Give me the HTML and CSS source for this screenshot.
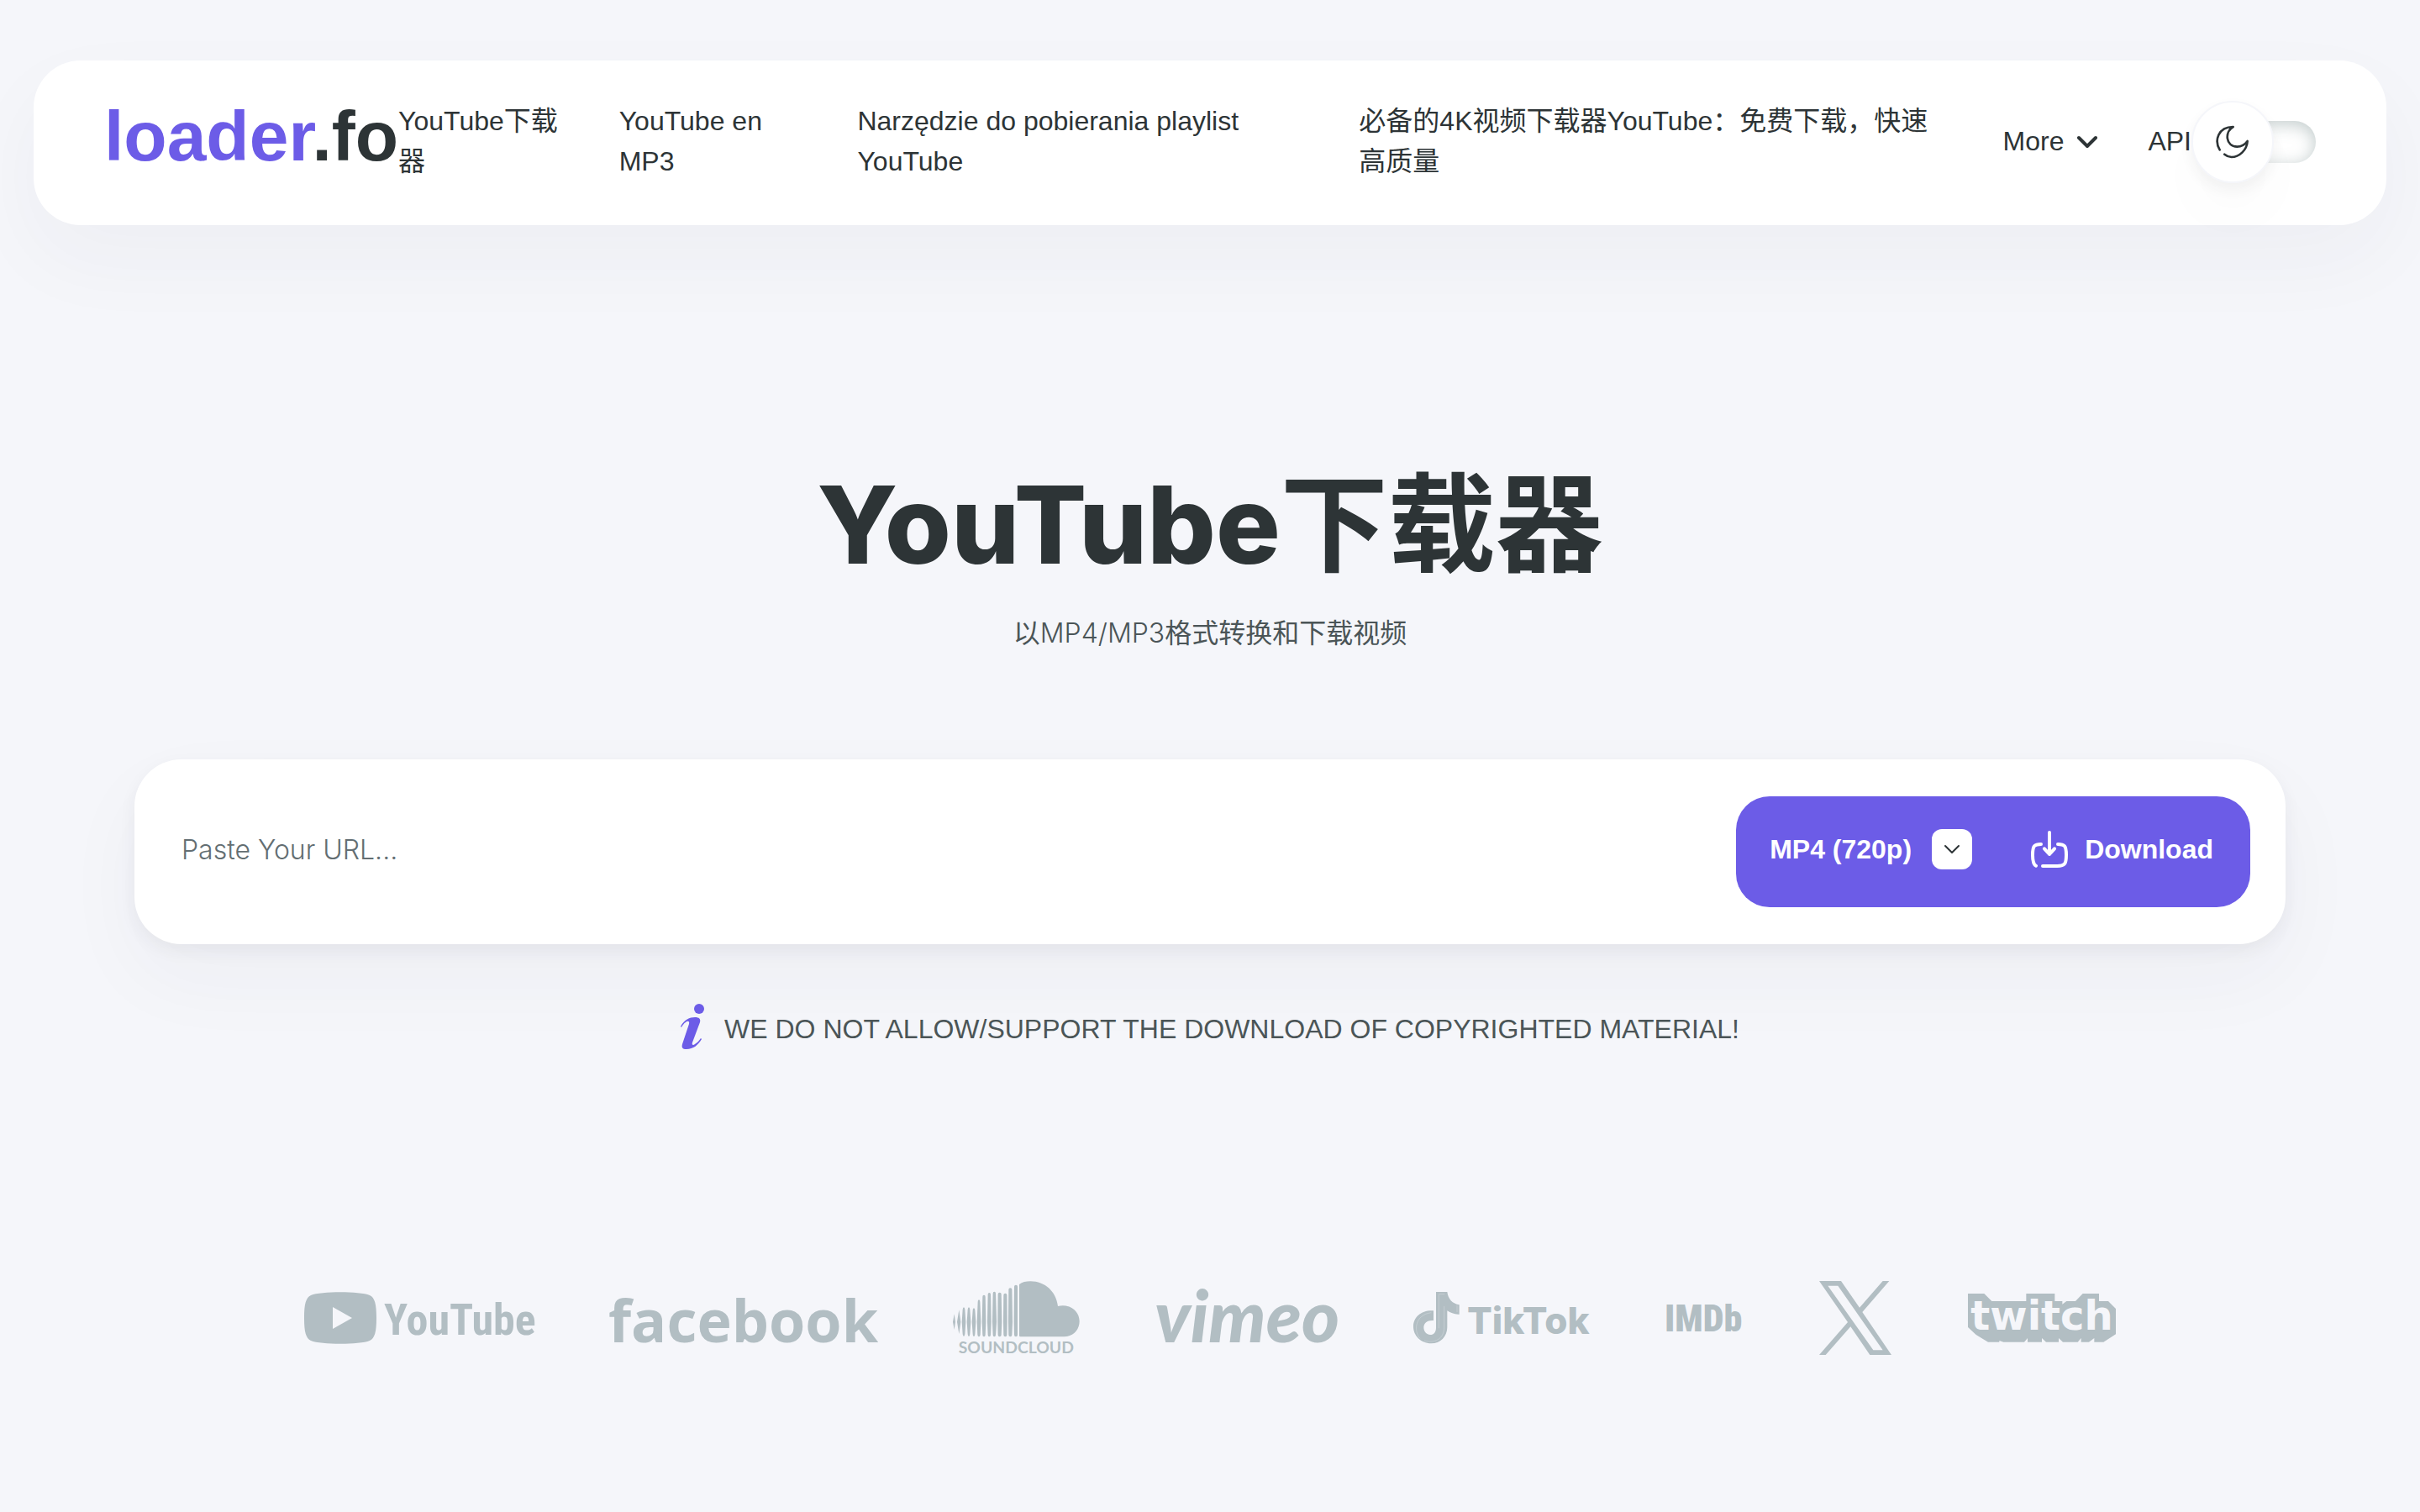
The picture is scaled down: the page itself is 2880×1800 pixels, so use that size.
FILE: index.html
```html
<!DOCTYPE html>
<html lang="zh">
<head>
  <meta charset="UTF-8" />
  <meta name="viewport" content="width=device-width, initial-scale=1.0" />
  <title>YouTube下载器</title>
  <link rel="stylesheet" href="styles.css">
</head>
<body>
  <header class="header">
    <a class="logo" href="#"><span>loader</span>.fo</a>
    <nav class="nav">
      <a href="#">YouTube下载器</a>
      <a href="#">YouTube en MP3</a>
      <a href="#">Narzędzie do pobierania playlist YouTube</a>
      <a href="#">必备的4K视频下载器YouTube：免费下载，快速高质量</a>
      <button class="more" type="button">More
        <svg width="24" height="18" viewBox="2 0 24 18" fill="none" stroke="currentColor" stroke-width="4" stroke-linecap="round" stroke-linejoin="round"><path d="M4 5l10 10L24 5" /></svg>
      </button>
      <a href="#">API</a>
    </nav>
    <label class="theme">
      <input type="checkbox" aria-label="Dark mode" />
      <span class="knob">
        <svg width="40" height="40" viewBox="292 150 120 120" fill="none" stroke="currentColor" stroke-width="8" stroke-linecap="round" stroke-linejoin="round"><path d="M306 238C286 205 300 156 354 156C323 174 326 225 368 227C385 227 397 218 405 207C403 240 375 264 348 264C338 263 330 260 323 254" /></svg>
      </span>
    </label>
  </header>

  <main class="main">
    <h1>YouTube<span>下载器</span></h1>
    <p class="subtitle">以<span>MP4/MP3</span>格式转换和下载视频</p>

    <form class="search">
      <input class="url" type="text" placeholder="Paste Your URL..." aria-label="URL" />
      <div class="actions">
        <label class="format">
          <select aria-label="Format">
            <option>MP4 (720p)</option>
          </select>
          <span class="arrow">
            <svg width="20" height="12" viewBox="0 0 20 12" fill="none" stroke="currentColor" stroke-width="2" stroke-linecap="round" stroke-linejoin="round"><path d="M2 2l8 8 8-8" /></svg>
          </span>
        </label>
        <button class="download" type="button">
          <svg width="44" height="44" viewBox="414 84 132 132" fill="none" stroke="currentColor" stroke-width="12" stroke-linecap="round" stroke-linejoin="round"><path d="M450 132C426 132 420 138 420 170C420 196 424 205 432 209M456 210H508C535 210 540 202 540 170C540 138 534 132 510 132M480 90V168M462 148L480 168L498 148" /></svg>
          Download
        </button>
      </div>
    </form>

    <p class="notice">
      <svg width="28" height="54" viewBox="0 0 28 54" fill="currentColor"><ellipse cx="22" cy="6" rx="6" ry="6" /><path d="M0 27C4 19 11 16 17 16C22 16 24 18 23 22L14 46C13 49 15 50 17 48C20 46 22 44 24 41L25 42C21 49 15 54 7 54C2 54 1 52 2 48L10 24C11 20 8 20 6 22C4 23 2 26 1 28Z" /></svg>
      WE DO NOT ALLOW/SUPPORT THE DOWNLOAD OF COPYRIGHTED MATERIAL!
    </p>

    <div class="brands">
      <!-- YouTube -->
      <svg width="271" height="62" viewBox="0 0 271 62">
        <path d="M8 4C20-1 66-1 78 4C84 7 86 14 86 31C86 48 84 55 78 58C66 63 20 63 8 58C2 55 0 48 0 31C0 14 2 7 8 4ZM34 18V44L57 31Z" />
        <text class="t-youtube" x="95" y="51">YouTube</text>
      </svg>
      <!-- facebook -->
      <svg width="319" height="62" viewBox="0 0 319 62">
        <text class="t-facebook" x="0" y="60">facebook</text>
      </svg>
      <!-- SoundCloud -->
      <svg width="151" height="88" viewBox="105 76 453 264">
        <path d="M342 88C352 80 366 77 382 77C434 77 474 114 480 166C518 155 557 182 557 220C557 250 534 275 502 275H346Q342 275 342 271Z" />
        <path d="M110 194l4 28-4 28-5-28zM127 179l6 43-6 43-7-43zM144 170q3 0 4 8l3 44-3 44q-2 8-4 8t-4-8l-3-44 3-44q1-8 4-8zM162 170q3 0 4 8l3 44-3 44q-1 8-4 8t-4-8l-3-44 3-44q1-8 4-8zM180 173q4 0 4 8l3 41-3 44q0 8-4 8t-4-8l-3-44 3-41q0-8 4-8zM198 143q4 0 4 8l3 71-2 46q-1 7-5 7t-5-7l-2-46 3-71q0-8 4-8z" />
        <path d="M216 126q5 0 5 6l2 90-2 46q0 7-5 7t-5-7l-2-46 2-90q0-6 5-6zM235 118q5 0 5 6l2 98-2 46q0 7-5 7t-5-7l-2-46 2-98q0-6 5-6zM253 114q5 0 5 6l3 102-3 46q0 7-5 7t-5-7l-2-46 2-102q0-6 5-6zM272 117q6 0 6 6l2 99-2 46q0 7-6 7t-6-7l-1-46 1-99q0-6 6-6zM292 120q6 0 6 6l1 96-1 46q0 7-6 7t-6-7l-1-46 1-96q0-6 6-6zM310 101q6 0 6 6l2 115-2 46q0 7-6 7t-6-7l-1-46 1-115q0-6 6-6zM330 90q6 0 6 6v172q0 7-6 7t-6-7l-1-46 1-126q0-6 6-6z" />
        <text class="t-soundcloud" x="331" y="334">SOUNDCLOUD</text>
      </svg>
      <!-- vimeo -->
      <svg width="215" height="62" viewBox="0 0 215 62">
        <text class="t-vimeo" x="-2" y="60">vimeo</text>
      </svg>
      <!-- TikTok -->
      <svg width="210" height="62" viewBox="0 0 210 62">
        <svg width="55" height="62" viewBox="126 114 165 186">
          <path d="M207 114H247C250 140 266 156 290 160V194C273 195 259 189 247 181V240C247 274 222 298 190 298C152 298 126 270 126 238C126 203 155 178 198 181V216C177 214 163 225 163 241C163 256 174 267 186 267C200 267 207 256 207 242Z" />
          <path class="seam" d="M217 244V122H238M150 280C128 258 128 196 190 188M165 288C200 298 236 284 236 240V165M282 162V186" />
        </svg>
        <text class="t-tiktok" x="64" y="50">TikTok</text>
      </svg>
      <!-- IMDb -->
      <svg width="91" height="38" viewBox="0 0 91 38">
        <text class="t-imdb" x="-2" y="35">IMDb</text>
      </svg>
      <!-- X -->
      <svg width="86" height="88" viewBox="135 75 258 264">
        <path d="M135 75H213L279 170L362 75H385L289 186L393 339H316L247 238L158 339H135L237 222ZM166 92L328 322H362L202 92Z" />
      </svg>
      <!-- Twitch -->
      <svg width="176" height="58" viewBox="666 120 528 174">
        <path d="M666 120H724L751 147H874V120H976V147H1003V158L1018 147H1050L1076 120H1134V147H1167L1194 174V265L1150 293H1117V279L1098 293H1070V279L1058 293H1005L990 279V293H945L930 279V293H879V279L867 293H793L778 288V293H738L695 267L666 240Z" />
        <text class="t-twitch" x="930" y="250">twitch</text>
      </svg>
    </div>
  </main>
</body>
</html>
```
FILE: styles.css
```css
* {
  box-sizing: border-box;
}

body {
  margin: 0;
  background: #f5f6fa;
  color: #2d3436;
  font-family: "Liberation Sans", "Noto Sans CJK SC", sans-serif;
  font-size: 32px;
  line-height: 48px;
}

a {
  color: inherit;
  text-decoration: none;
}

input, select, button {
  font: inherit;
  color: inherit;
  border: none;
  background: none;
  padding: 0;
  margin: 0;
}

button {
  cursor: pointer;
}

.header {
  display: flex;
  align-items: flex-start;
  margin: 72px 40px 0;
  padding: 48px 84px 50px;
  background: #fff;
  border-radius: 56px;
  box-shadow: 0 40px 100px rgba(40, 40, 70, 0.04);
}

.logo {
  font-size: 84px;
  line-height: 84px;
  font-weight: bold;
}

.logo span {
  color: #6c5ce7;
}

.nav {
  flex: 1;
  display: flex;
  align-items: center;
  gap: 60px;
}

.more {
  display: flex;
  align-items: center;
  gap: 16px;
}

/* Theme switch */
.theme {
  display: flex;
  align-items: center;
  flex-shrink: 0;
  cursor: pointer;
}

.theme input {
  order: 2;
  appearance: none;
  width: 100px;
  height: 50px;
  margin-left: -50px;
  border-radius: 25px;
  box-shadow: inset 0 4px 20px rgba(99, 124, 124, 0.4);
}

.knob {
  position: relative;
  display: flex;
  align-items: center;
  justify-content: center;
  width: 98px;
  height: 98px;
  order: 1;
  z-index: 1;
  background: #fff;
  border: 2px solid #f5f6fa;
  border-radius: 50%;
  box-shadow: 0 8px 16px rgba(45, 52, 54, 0.06), 0 40px 80px rgba(45, 52, 54, 0.02);
}

.main {
  padding: 282px 160px 0;
  text-align: center;
}

h1 {
  margin: 0 0 30px;
  font-family: Inter, "Noto Sans CJK SC", sans-serif;
  font-size: 128px;
  line-height: 150px;
  font-weight: 800;
}

h1 span {
  font-weight: 700;
}

.subtitle {
  margin: 0 0 126px;
  font-family: Inter, "Noto Sans CJK SC", sans-serif;
  color: #4b5557;
}

.subtitle span {
  font-weight: 300;
}

.search {
  display: flex;
  align-items: center;
  padding: 44px 42px 44px 56px;
  background: #fff;
  border-radius: 56px;
  box-shadow: 0 8px 20px rgba(45, 52, 64, 0.06), 0 40px 100px rgba(40, 40, 80, 0.04);
}

.url {
  flex: 1;
  height: 132px;
  padding-bottom: 6px;
  outline: none;
  font-family: Inter, sans-serif;
  font-weight: 300;
}

.url::placeholder {
  color: #636e72;
}

.actions {
  display: flex;
  align-items: center;
  gap: 70px;
  height: 132px;
  padding: 0 44px 6px 40px;
  background: #6c5ce7;
  border-radius: 40px;
  color: #fff;
  font-weight: bold;
}

.format {
  display: flex;
  align-items: center;
  gap: 24px;
}

.format select {
  appearance: none;
  outline: none;
}

.arrow {
  display: flex;
  align-items: center;
  justify-content: center;
  width: 48px;
  height: 48px;
  background: #fff;
  border-radius: 12px;
  color: #2d3436;
}

.download {
  display: flex;
  align-items: center;
  gap: 20px;
}

.notice {
  display: flex;
  justify-content: center;
  align-items: flex-end;
  gap: 24px;
  margin: 71px 0 0;
  color: #4b5557;
}

.notice svg {
  color: #6c5ce7;
}

/* Supported sites */
.brands {
  display: flex;
  justify-content: center;
  align-items: center;
  gap: 91px;
  margin: 276px 0 99px;
}

.brands svg {
  fill: #b2bec3;
  flex-shrink: 0;
  overflow: visible;
}

.brands .seam {
  fill: none;
  stroke: #f5f6fa;
  stroke-width: 2px;
  opacity: 0.4;
}

.t-youtube {
  font: bold 52px "Roboto Condensed", Roboto, sans-serif;
}

.t-facebook {
  font: bold 70px "Open Sans", sans-serif;
}

.t-soundcloud {
  font: bold 58px Lato, sans-serif;
  text-anchor: middle;
}

.t-vimeo {
  font: italic 900 86px Lato, sans-serif;
}

.t-tiktok {
  font: 800 44px Inter, sans-serif;
}

.t-imdb {
  font: 900 44px "Roboto Condensed", Roboto, sans-serif;
}

.brands .t-twitch {
  font: bold 144px "DejaVu Sans", sans-serif;
  fill: #f5f6fa;
  text-anchor: middle;
}
```
